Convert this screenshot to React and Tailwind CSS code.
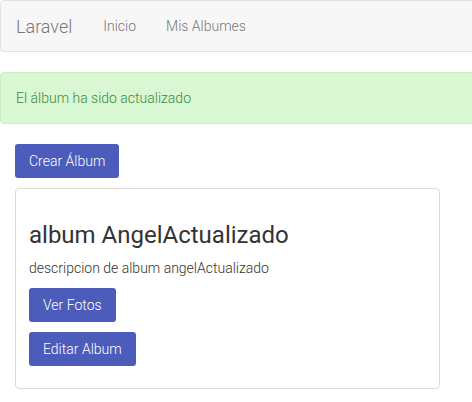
export default function App() {
  return (
    <div className="w-full overflow-hidden bg-white" style={{ fontFamily: "Roboto, 'Liberation Sans', sans-serif" }}>
      <div className="w-[500px]">
        {/* NAVBAR */}
        <nav className="h-[52px] flex items-center bg-[#f7f7f7] border border-[#e3e3e3] rounded-l-[4px] mb-5">
          <span className="pl-[15px] pr-[15px] text-[18px] font-light text-[#777]">Laravel</span>
          <a className="ml-[16px] text-sm font-light text-[#777]">Inicio</a>
          <a className="ml-[30px] text-sm font-light text-[#777]">Mis Albumes</a>
        </nav>

        {/* ALERT */}
        <div className="h-[52px] flex items-center px-[15px] bg-[#d9f7d2] border border-[#c8efbf] rounded-l-[4px] text-sm font-light text-[#3d8b3d] mb-5">
          El álbum ha sido actualizado
        </div>

        <div className="pl-[15px]">
          <button className="h-[34px] px-[14px] rounded-[3px] bg-[#4c5cbb] text-white text-sm font-light">
            Crear Álbum
          </button>

          {/* CARD */}
          <div className="mt-[10px] w-[425px] h-[201px] border border-[#dcdcdc] rounded-[4px] px-[13px] pt-[33px]">
            <h2 className="text-[24px] leading-[26px] text-[#333] mb-[10px]">album AngelActualizado</h2>
            <p className="text-sm leading-5 font-light text-[#333] mb-[10px]">descripcion de album angelActualizado</p>
            <div className="flex flex-col items-start gap-[10px]">
              <button className="h-[34px] px-[14px] rounded-[3px] bg-[#4c5cbb] text-white text-sm font-light">
                Ver Fotos
              </button>
              <button className="h-[34px] px-[14px] rounded-[3px] bg-[#4c5cbb] text-white text-sm font-light">
                Editar Album
              </button>
            </div>
          </div>
        </div>
        <div className="h-[20px]" />
      </div>
    </div>
  );
}
